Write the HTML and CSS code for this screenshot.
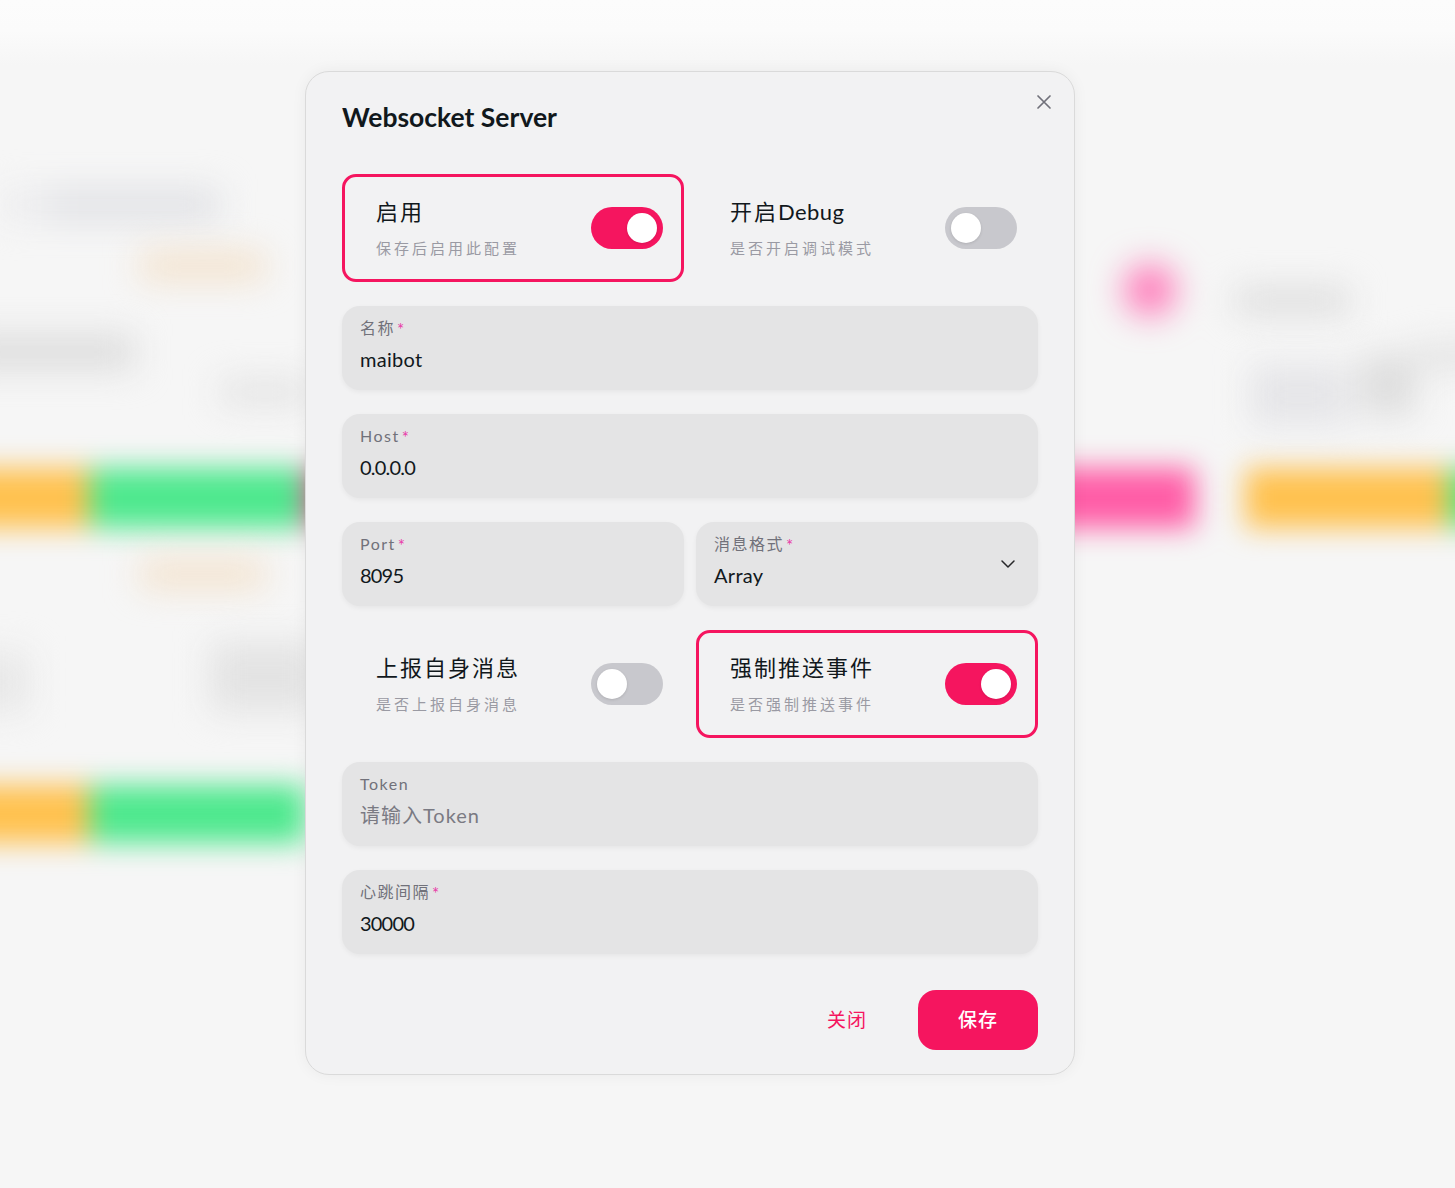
FILE: index.html
```html
<!DOCTYPE html>
<html lang="zh-CN">
<head>
<meta charset="utf-8">
<title>Websocket Server</title>
<link rel="stylesheet" href="styles.css">
</head>
<body>
<div class="backdrop" aria-hidden="true">
  <div class="bg-row bg-row-a"><i class="g g0"></i><i class="g g1"></i></div>
  <div class="bg-row bg-row-b"><i class="o o-faint"></i><i class="pink-dot"></i><i class="g g2"></i></div>
  <div class="bg-row bg-row-c"><i class="g g3"></i><i class="g g4"></i><i class="g g5"></i><i class="g g6"></i><i class="g g8"></i></div>
  <div class="band band-1"><i class="c-o c-o1"></i><i class="c-g c-g1"></i><i class="c-p"></i><i class="c-o c-o2"></i><i class="c-g c-g2"></i></div>
  <div class="bg-row bg-row-d"><i class="o o-faint"></i></div>
  <div class="bg-row bg-row-e"><i class="g g9"></i><i class="g g7"></i></div>
  <div class="band band-2"><i class="c-o c-o1"></i><i class="c-g c-g1"></i></div>
</div>

<div class="overlay">
  <section class="modal">
    <button class="close" aria-label="关闭">
      <svg width="16" height="16" viewBox="0 0 16 16" fill="none" stroke="#71717a" stroke-width="1.7" stroke-linecap="round"><path d="M2 2l12 12M14 2L2 14"/></svg>
    </button>
    <h1 class="title">Websocket Server</h1>
    <div class="form">
      <div class="switch-card on">
        <div class="switch-text"><div class="switch-title">启用</div><div class="switch-sub">保存后启用此配置</div></div>
        <span class="switch on"><span class="thumb"></span></span>
      </div>
      <div class="switch-card">
        <div class="switch-text"><div class="switch-title">开启<span class="latin">Debug</span></div><div class="switch-sub">是否开启调试模式</div></div>
        <span class="switch"><span class="thumb"></span></span>
      </div>
      <div class="field wide"><div class="label">名称<em>*</em></div><div class="value">maibot</div></div>
      <div class="field wide"><div class="label">Host<em>*</em></div><div class="value num">0.0.0.0</div></div>
      <div class="field"><div class="label">Port<em>*</em></div><div class="value num">8095</div></div>
      <div class="field select"><div class="label">消息格式<em>*</em></div><div class="value">Array</div>
        <svg class="chevron" width="16" height="16" viewBox="0 0 16 16" fill="none" stroke="#27272a" stroke-width="1.5" stroke-linecap="round" stroke-linejoin="round"><path d="M2 5l6 6 6-6"/></svg>
      </div>
      <div class="switch-card">
        <div class="switch-text"><div class="switch-title">上报自身消息</div><div class="switch-sub">是否上报自身消息</div></div>
        <span class="switch"><span class="thumb"></span></span>
      </div>
      <div class="switch-card on">
        <div class="switch-text"><div class="switch-title">强制推送事件</div><div class="switch-sub">是否强制推送事件</div></div>
        <span class="switch on"><span class="thumb"></span></span>
      </div>
      <div class="field wide"><div class="label">Token</div><div class="value placeholder">请输入Token</div></div>
      <div class="field wide"><div class="label">心跳间隔<em>*</em></div><div class="value num">30000</div></div>
    </div>
    <footer class="actions">
      <button class="btn ghost">关闭</button>
      <button class="btn primary">保存</button>
    </footer>
  </section>
</div>
</body>
</html>
```
FILE: styles.css
```css
* { box-sizing: border-box; }
html, body { margin: 0; height: 1188px; overflow: hidden; }
body {
  position: relative;
  background: #f6f6f6;
  font-family: "Lato", "Noto Sans CJK SC", sans-serif;
  color: #11181c;
}
.backdrop {
  position: absolute;
  inset: 0 -40px 0 -40px;
  overflow: hidden;
  background: linear-gradient(#fcfcfc 0, #fbfbfb 30px, #f6f6f6 65px);
}
.backdrop i { display: block; flex: none; }
.bg-row, .band { display: flex; filter: blur(17px); }
.bg-row-a { height: 30px; margin-top: 190px; padding-left: 40px; }
.g0 { width: 50px; height: 30px; background: #ececee; }
.g1 { width: 170px; height: 30px; background: #dfe0e4; }
.bg-row-b { height: 40px; margin-top: 25px; padding-left: 180px; align-items: flex-start; }
.o-faint { width: 125px; height: 26px; background: #f3e0c8; }
.bg-row-b .o-faint { margin-top: 8px; }
.bg-row-b .pink-dot { width: 50px; height: 50px; margin: 20px 0 0 860px; border-radius: 50%; background: #ff70b4; }
.g2 { width: 115px; height: 26px; margin: 43px 0 0 60px; background: #dcdcdc; }
.bg-row-c { height: 90px; margin-top: 50px; }
.g3 { width: 175px; height: 34px; background: #dcdcdc; }
.g4 { width: 90px; height: 24px; margin: 45px 0 0 85px; background: #e2e2e2; }
.g5 { width: 100px; height: 60px; margin: 30px 0 0 940px; background: #e5e5e8; }
.g6 { width: 55px; height: 60px; margin: 20px 0 0 10px; background: #dddddd; }
.g8 { width: 100px; height: 22px; margin: 10px 0 0 0; background: #e0e0e0; }
.band { height: 60px; filter: blur(14px); }
.band-1 { margin-top: 43px; }
.c-o1 { width: 130px; background: #ffc14e; }
.c-g1 { width: 215px; background: #4de88d; }
.c-p { width: 890px; background: #ff5ca6; }
.c-o2 { width: 205px; margin-left: 50px; background: #ffc14e; }
.c-g2 { width: 60px; background: #4de88d; }
.bg-row-d { height: 26px; margin-top: 33px; padding-left: 180px; }
.bg-row-e { height: 80px; margin-top: 55px; }
.g9 { width: 70px; height: 60px; margin-top: 10px; background: #e8e8e8; }
.g7 { width: 110px; height: 70px; margin-left: 180px; background: #e3e3e3; }
.band-2 { margin-top: 63px; height: 58px; }

.overlay {
  position: absolute;
  inset: 0;
  display: flex;
  justify-content: center;
  align-items: flex-start;
  padding: 71px 75px 0 0;
}
.modal {
  position: relative;
  width: 770px;
  height: 1004px;
  padding: 0 36px;
  background: #f2f2f3;
  border: 1px solid #dadada;
  border-radius: 24px;
  box-shadow: 0 0 15px rgba(0, 0, 0, .05);
}
.close {
  position: absolute;
  top: 22px;
  right: 22px;
  padding: 0;
  border: 0;
  background: none;
  width: 16px;
  height: 16px;
  display: block;
}
.close svg { display: block; }
.title {
  margin: 0;
  height: 102px;
  padding-top: 27px;
  font-size: 26.5px;
  line-height: 36px;
  font-weight: 700;
  color: #11181c;
}
.form {
  display: grid;
  grid-template-columns: 342px 342px;
  gap: 24px 12px;
}
.switch-card {
  height: 108px;
  padding: 0 18px 0 31px;
  border: 3px solid transparent;
  border-radius: 14px;
  display: flex;
  align-items: center;
  justify-content: space-between;
}
.switch-card.on { border-color: #f5155f; }
.switch-title { font-size: 22px; line-height: 28px; letter-spacing: 2px; color: #11181c; }
.switch-title .latin { letter-spacing: .4px; }
.switch-sub { font-size: 15px; line-height: 22px; letter-spacing: 3px; color: #9a9aa3; margin-top: 11px; }
.switch {
  width: 72px;
  height: 42px;
  padding: 6px;
  border-radius: 21px;
  background: #c8c8cd;
  display: flex;
}
.switch.on { background: #f5155f; justify-content: flex-end; }
.thumb { width: 30px; height: 30px; border-radius: 50%; background: #fff; box-shadow: 0 1px 3px rgba(0,0,0,.12); }
.field {
  position: relative;
  height: 84px;
  padding: 11px 18px 0;
  border-radius: 18px;
  background: #e4e4e5;
  box-shadow: 0 2px 5px rgba(0, 0, 0, .05);
}
.wide { grid-column: 1 / -1; }
.label { font-size: 16px; line-height: 22px; letter-spacing: 1.5px; color: #71717a; }
.label em { font-style: normal; color: #e83ca8; font-size: 17px; line-height: 0; margin-left: 2px; vertical-align: -2px; }
.value { margin-top: 6px; font-size: 20px; line-height: 28px; letter-spacing: .3px; color: #11181c; }
.num { letter-spacing: -.8px; }
.placeholder { color: #7a7a83; letter-spacing: 1px; }
.chevron { position: absolute; right: 22px; top: 34px; }
.actions {
  display: flex;
  justify-content: flex-end;
  gap: 12px;
  margin-top: 36px;
}
.btn {
  width: 120px;
  height: 60px;
  padding: 0 0 4px;
  border: 0;
  border-radius: 18px;
  font: inherit;
  font-size: 19px;
  letter-spacing: 1px;
}
.ghost { background: none; color: #f5155f; padding-left: 2px; }
.primary { background: #f5155f; color: #fff; font-weight: 500; }
```
